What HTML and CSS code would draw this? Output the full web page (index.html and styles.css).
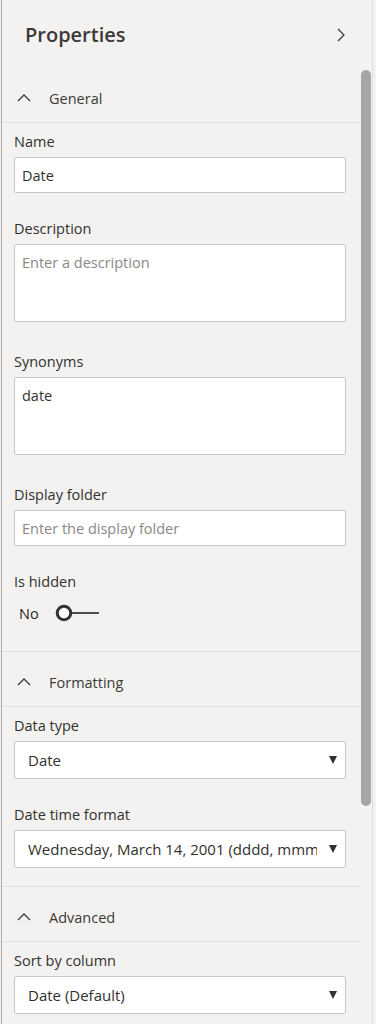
FILE: index.html
```html
<!DOCTYPE html>
<html lang="en">
<head>
  <meta charset="UTF-8">
  <meta name="viewport" content="width=device-width, initial-scale=1.0">
  <title>Properties</title>
  <link rel="stylesheet" href="styles.css">
</head>
<body>
  <div class="panel">
    <div class="main">
      <div class="header">
        <h1>Properties</h1>
        <svg class="collapse" width="12" height="16" viewBox="0 0 12 16">
          <path d="M3 2 L9 8 L3 14" fill="none" stroke="#3b3a39" stroke-width="1.3"/>
        </svg>
      </div>

      <div class="section first">
        <div class="section-head">
          <svg class="caret" width="14" height="10" viewBox="0 0 14 10">
            <path d="M1 8 L7 2 L13 8" fill="none" stroke="#3b3a39" stroke-width="1.3"/>
          </svg>
          <span>General</span>
        </div>
        <div class="section-body">
          <div class="field">
            <label>Name</label>
            <input class="text" type="text" value="Date">
          </div>
          <div class="field">
            <label>Description</label>
            <textarea class="area" placeholder="Enter a description"></textarea>
          </div>
          <div class="field after-area">
            <label>Synonyms</label>
            <textarea class="area">date</textarea>
          </div>
          <div class="field after-area">
            <label>Display folder</label>
            <input class="text" type="text" placeholder="Enter the display folder">
          </div>
          <div class="field">
            <label>Is hidden</label>
            <div class="toggle-row">
              <span>No</span>
              <svg width="46" height="20" viewBox="0 0 46 20">
                <circle cx="10" cy="10" r="6.8" fill="#fff" stroke="#323130" stroke-width="3"/>
                <line x1="17" y1="10" x2="45" y2="10" stroke="#323130" stroke-width="1.7"/>
              </svg>
            </div>
          </div>
        </div>
      </div>

      <div class="section">
        <div class="section-head">
          <svg class="caret" width="14" height="10" viewBox="0 0 14 10">
            <path d="M1 8 L7 2 L13 8" fill="none" stroke="#3b3a39" stroke-width="1.3"/>
          </svg>
          <span>Formatting</span>
        </div>
        <div class="section-body">
          <div class="field">
            <label>Data type</label>
            <div class="select"><span>Date</span><i class="arrow"></i></div>
          </div>
          <div class="field wide-gap">
            <label>Date time format</label>
            <div class="select"><span class="clip">Wednesday, March 14, 2001 (dddd, mmmm d, yyyy)</span><i class="arrow"></i></div>
          </div>
        </div>
      </div>

      <div class="section">
        <div class="section-head">
          <svg class="caret" width="14" height="10" viewBox="0 0 14 10">
            <path d="M1 8 L7 2 L13 8" fill="none" stroke="#3b3a39" stroke-width="1.3"/>
          </svg>
          <span>Advanced</span>
        </div>
        <div class="section-body">
          <div class="field">
            <label>Sort by column</label>
            <div class="select"><span>Date (Default)</span><i class="arrow"></i></div>
          </div>
        </div>
      </div>
    </div>

    <div class="scrollbar">
      <div class="thumb"></div>
    </div>
  </div>
</body>
</html>
```

FILE: styles.css
```css
html, body {
  margin: 0;
  height: 1024px;
  overflow: hidden;
}
body {
  font-family: "Open Sans", "Noto Sans", sans-serif;
  background-color: #f3f2f1;
  color: #252423;
}
.panel {
  display: flex;
  height: 1024px;
  width: 370px;
  margin-left: 1px;
  border-left: 1px solid #ababab;
  border-right: 1px solid #dcdcdc;
}
.main {
  width: 358px;
  flex-shrink: 0;
}
.header {
  height: 68px;
  display: flex;
  align-items: flex-start;
  justify-content: space-between;
  padding: 21px 13px 0 23px;
  box-sizing: border-box;
}
.header h1 {
  margin: 0;
  font-size: 20px;
  line-height: 28px;
  font-weight: 600;
  color: #3b3a39;
}
.collapse {
  margin-top: 6px;
}
.section {
  border-top: 1px solid #e1dfdd;
}
.section.first {
  border-top: none;
}
.section-head {
  height: 48px;
  padding-top: 6px;
  display: flex;
  align-items: center;
  border-bottom: 1px solid #e1dfdd;
  font-size: 14.5px;
  color: #3b3a39;
}
.caret {
  margin: 0 18px 0 15px;
}
.section-body {
  padding: 9px 14px 18px 12px;
}
.field {
  margin-top: 26px;
}
.field:first-child {
  margin-top: 0;
}
.field.after-area {
  margin-top: 30px;
}
.field.wide-gap {
  margin-top: 26px;
}
label {
  display: block;
  font-size: 14.5px;
  line-height: 20px;
  margin-bottom: 5px;
  color: #323130;
}
.text, .area {
  display: block;
  width: 100%;
  box-sizing: border-box;
  border: 1px solid #c8c6c4;
  border-radius: 2px;
  background-color: #fff;
  font-family: inherit;
  font-size: 14.5px;
  color: #323130;
  padding: 0 7px;
  margin: 0;
  outline: none;
}
.text {
  height: 36px;
}
.area {
  height: 78px;
  padding-top: 8px;
  resize: none;
  line-height: 20px;
}
::placeholder {
  color: #8a8886;
}
.toggle-row {
  display: flex;
  align-items: center;
  height: 32px;
  margin-top: 1px;
  margin-bottom: 4px;
  padding-left: 5px;
  font-size: 14.5px;
  gap: 15px;
}
.select {
  display: flex;
  align-items: center;
  height: 38px;
  box-sizing: border-box;
  border: 1px solid #c8c6c4;
  border-radius: 2px;
  background-color: #fff;
  padding: 0 8px 0 13px;
  font-size: 15px;
  color: #323130;
}
.select span {
  flex: 1;
  white-space: nowrap;
  overflow: hidden;
  margin-right: 12px;
}
.select .clip {
  text-overflow: clip;
}
.arrow {
  width: 0;
  height: 0;
  border-left: 4px solid transparent;
  border-right: 4px solid transparent;
  border-top: 8px solid #323130;
}
.scrollbar {
  width: 11px;
  flex-shrink: 0;
}
.thumb {
  margin: 70px 0 0 1px;
  width: 10px;
  height: 736px;
  border-radius: 5px;
  background-color: #a6a6a6;
}
```
